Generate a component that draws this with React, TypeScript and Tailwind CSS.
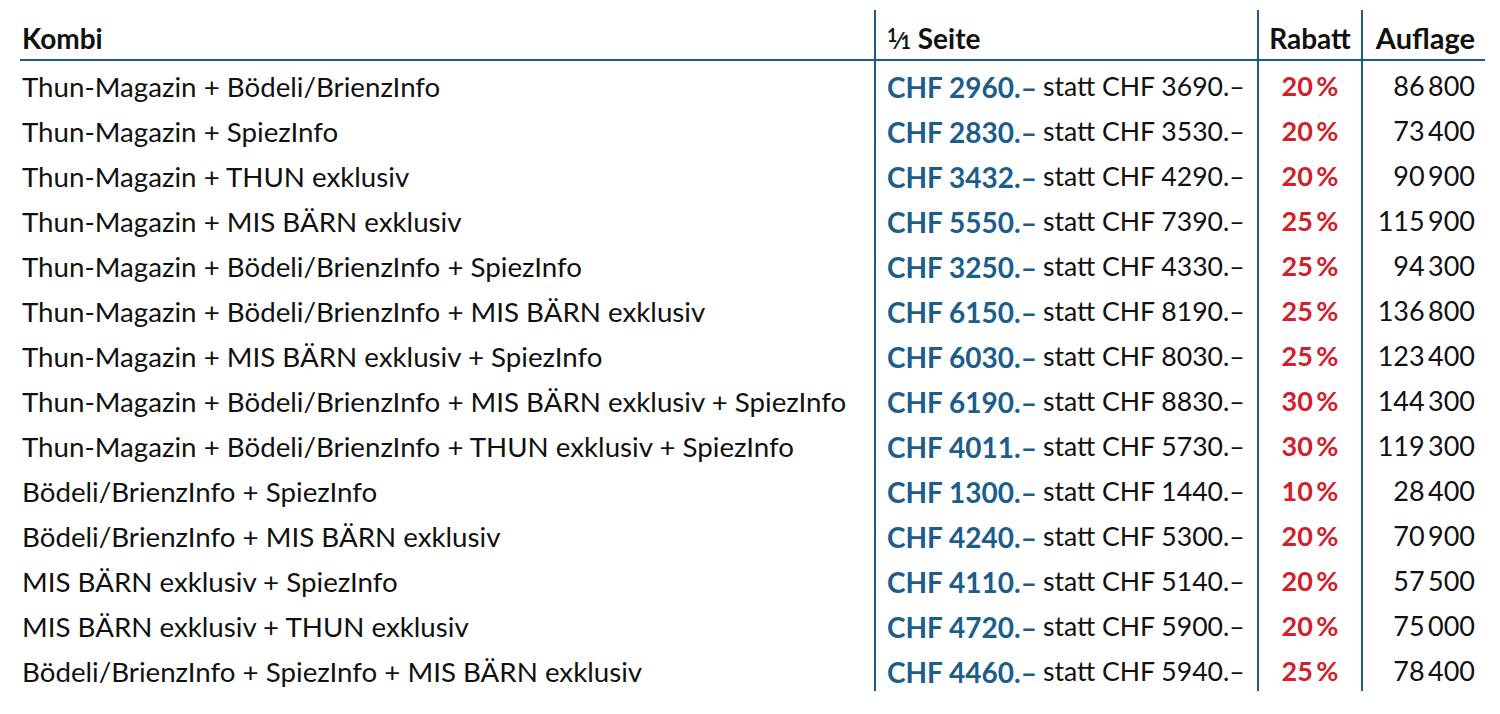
import React from 'react';

const rows = [
  ['Thun-Magazin + Bödeli/BrienzInfo', '2960', '3690', '20', '86\u2009800'],
  ['Thun-Magazin + SpiezInfo', '2830', '3530', '20', '73\u2009400'],
  ['Thun-Magazin + THUN exklusiv', '3432', '4290', '20', '90\u2009900'],
  ['Thun-Magazin + MIS BÄRN exklusiv', '5550', '7390', '25', '115\u2009900'],
  ['Thun-Magazin + Bödeli/BrienzInfo + SpiezInfo', '3250', '4330', '25', '94\u2009300'],
  ['Thun-Magazin + Bödeli/BrienzInfo + MIS BÄRN exklusiv', '6150', '8190', '25', '136\u2009800'],
  ['Thun-Magazin + MIS BÄRN exklusiv + SpiezInfo', '6030', '8030', '25', '123\u2009400'],
  ['Thun-Magazin + Bödeli/BrienzInfo + MIS BÄRN exklusiv + SpiezInfo', '6190', '8830', '30', '144\u2009300'],
  ['Thun-Magazin + Bödeli/BrienzInfo + THUN exklusiv + SpiezInfo', '4011', '5730', '30', '119\u2009300'],
  ['Bödeli/BrienzInfo + SpiezInfo', '1300', '1440', '10', '28\u2009400'],
  ['Bödeli/BrienzInfo + MIS BÄRN exklusiv', '4240', '5300', '20', '70\u2009900'],
  ['MIS BÄRN exklusiv + SpiezInfo', '4110', '5140', '20', '57\u2009500'],
  ['MIS BÄRN exklusiv + THUN exklusiv', '4720', '5900', '20', '75\u2009000'],
  ['Bödeli/BrienzInfo + SpiezInfo + MIS BÄRN exklusiv', '4460', '5940', '25', '78\u2009400'],
];

export default function App() {
  return (
    <div className="min-h-[714px] bg-white pt-[10px] pl-[20px] text-[#111] font-['Lato','Liberation_Sans',sans-serif]">
      <div className="grid w-[1465px] grid-cols-[854px_383px_104px_124px]">
        {/* Header */}
        <div className="h-[51px] border-b-2 border-[#1d5a88] pl-[2px] pt-[12px] text-[28px] font-bold leading-[32px]">
          Kombi
        </div>
        <div className="h-[51px] border-b-2 border-l-2 border-[#1d5a88] pl-[11px] pt-[12px] text-[28px] font-bold leading-[32px]">
          <span className="relative -top-[7px] text-[18px]">1</span>
          <span className="text-[22px]">⁄</span>
          <span className="text-[18px]">1</span> Seite
        </div>
        <div className="h-[51px] border-b-2 border-l-2 border-[#1d5a88] pt-[12px] text-center text-[28px] font-bold leading-[32px]">
          Rabatt
        </div>
        <div className="h-[51px] border-b-2 border-l-2 border-[#1d5a88] pr-[10px] pt-[12px] text-right text-[29px] font-bold leading-[32px]">
          Auflage
        </div>

        {/* Body */}
        {rows.map(([name, price, old, pct, aufl]) => (
          <React.Fragment key={name}>
            <div className="flex h-[45px] items-center whitespace-nowrap pl-[2px] pt-[6px] text-[27.7px]">{name}</div>
            <div className="flex h-[45px] items-center whitespace-nowrap border-l-2 border-[#1d5a88] pl-[11px] pt-[6px] text-[28px]">
              <span className="font-bold text-[#1b5d8b]">CHF {price}.–</span>
              <span className="ml-[6px] text-[26.6px]">statt CHF {old}.–</span>
            </div>
            <div className="flex h-[45px] items-center justify-center border-l-2 border-[#1d5a88] pt-[6px] text-[27px] font-bold text-[#d1202b]">
              {pct}{'\u2009'}%
            </div>
            <div className="flex h-[45px] items-center justify-end border-l-2 border-[#1d5a88] pr-[10px] pt-[6px] text-[27px]">
              {aufl}
            </div>
          </React.Fragment>
        ))}
      </div>
    </div>
  );
}
